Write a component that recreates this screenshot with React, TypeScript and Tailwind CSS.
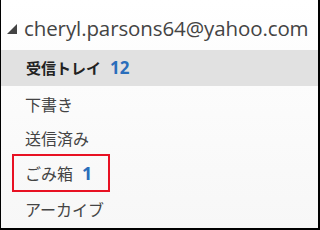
import React from "react";

const folders = [
  { name: "下書き", count: null, h: "h-[35px]" },
  { name: "送信済み", count: null, h: "h-[33px]" },
  { name: "ごみ箱", count: 1, h: "h-[38px]", boxed: true },
  { name: "アーカイブ", count: null, h: "h-[34px]" },
];

export default function App() {
  return (
    <div
      className="w-[320px] h-[230px] overflow-hidden border-l border-r-2 border-b-2 border-black bg-gradient-to-b from-white to-[#f7f7f7] text-[#444]"
      style={{ fontFamily: "'Open Sans', 'Noto Sans CJK JP', sans-serif" }}
    >
      <div className="h-[50px] flex items-center pl-[6px] pt-[6px]">
        <svg width="11" height="10" viewBox="0 0 11 10" className="mr-[6px] mt-[1px]">
          <polygon points="10,0 10,10 0,10" fill="#444" />
        </svg>
        <span className="text-[20.5px] leading-none tracking-[-0.1px]">cheryl.parsons64@yahoo.com</span>
      </div>

      <div className="h-[36px] bg-[#e1e1e1] flex items-center pl-[25px]">
        <span className="text-[15px] font-bold text-[#222]" style={{ fontFamily: "'Noto Sans CJK JP', sans-serif" }}>
          受信トレイ
        </span>
        <span className="text-[17px] font-bold text-[#2a6ebb] ml-[9px]">12</span>
      </div>

      {folders.map((f) => (
        <div key={f.name} className={`${f.h} flex items-center pl-[11px]`}>
          <div
            className={
              f.boxed
                ? "h-[38px] w-[98px] border-2 border-[#e81123] flex items-center pl-[11px]"
                : "flex items-center pl-[13px]"
            }
          >
            <span className="text-[16px]" style={{ fontFamily: "'Noto Sans CJK JP', sans-serif" }}>
              {f.name}
            </span>
            {f.count !== null && (
              <span className="text-[18px] font-bold text-[#2a6ebb] ml-[9px]">{f.count}</span>
            )}
          </div>
        </div>
      ))}
    </div>
  );
}
